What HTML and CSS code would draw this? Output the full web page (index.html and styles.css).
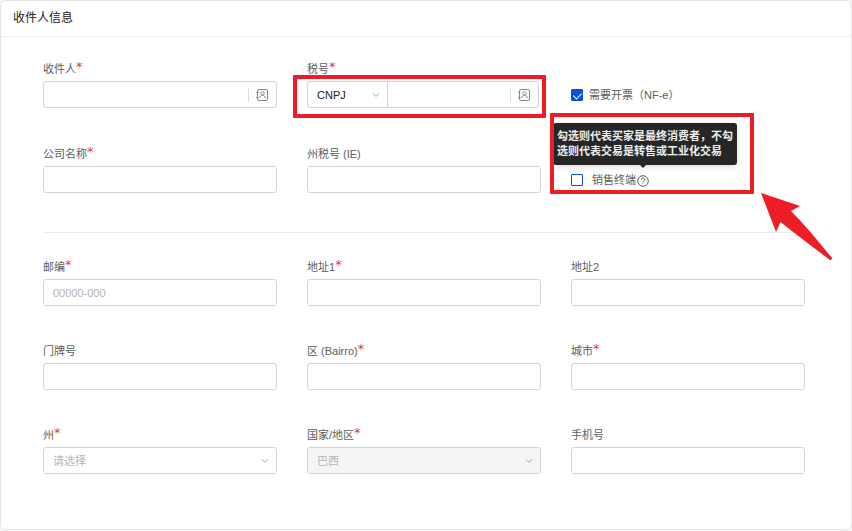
FILE: index.html
```html
<!DOCTYPE html>
<html lang="zh-CN">
<head>
<meta charset="utf-8">
<meta name="viewport" content="width=device-width, initial-scale=1">
<title>收件人信息</title>
<link rel="stylesheet" href="styles.css">
</head>
<body>
<svg class="sprite" aria-hidden="true">
  <symbol id="contact" viewBox="0 0 12 12">
    <rect x="1.5" y="0.5" width="10" height="11" rx="1.5"/>
    <circle cx="6.5" cy="4.4" r="1.7"/>
    <path d="M3.6 9.2C4 7.2 5 6.2 6.5 6.2S9 7.2 9.4 9.2M0.2 3.5H2.4M0.2 8.5H2.4"/>
  </symbol>
  <symbol id="chevron" viewBox="0 0 8 8">
    <path d="M0.8 2.4L4 5.4L7.2 2.4"/>
  </symbol>
</svg>
<main class="card">
  <header class="card-header"><h1>收件人信息</h1></header>
  <form class="card-body">
    <section class="grid grid-company">
      <div class="field">
        <label for="recipient">收件人<span class="required">*</span></label>
        <div class="control">
          <input id="recipient" type="text">
          <button type="button" class="picker" aria-label="选择收件人"><svg><use href="#contact"/></svg></button>
        </div>
      </div>
      <div class="field">
        <label for="tax">税号<span class="required">*</span></label>
        <div class="control control-tax">
          <div class="tax-type">
            <select aria-label="税号类型"><option>CNPJ</option></select>
            <svg class="chevron"><use href="#chevron"/></svg>
          </div>
          <input id="tax" type="text">
          <button type="button" class="picker" aria-label="选择税号"><svg><use href="#contact"/></svg></button>
          <span class="highlight highlight-tax"></span>
        </div>
      </div>
      <div class="field field-check">
        <input id="invoice" type="checkbox" checked>
        <label for="invoice">需要开票（NF-e）</label>
      </div>
      <div class="field">
        <label for="company">公司名称<span class="required">*</span></label>
        <input class="control" id="company" type="text">
      </div>
      <div class="field">
        <label for="ie">州税号 (IE)</label>
        <input class="control" id="ie" type="text">
      </div>
      <div class="field field-check field-terminal">
        <input id="terminal" type="checkbox">
        <label for="terminal">销售终端</label>
        <button type="button" class="help" aria-label="说明" aria-describedby="tip">
          <svg viewBox="0 0 12 12"><circle cx="6" cy="6" r="5.3"/><path d="M4.3 4.8C4.3 3.6 5 3 6 3S7.7 3.7 7.7 4.6C7.7 5.8 6 5.9 6 7.3M6 8.3V9.2"/></svg>
        </button>
        <div class="tooltip" id="tip" role="tooltip">勾选则代表买家是最终消费者，不勾选则代表交易是转售或工业化交易</div>
        <span class="highlight highlight-terminal"></span>
        <svg class="arrow" viewBox="0 0 72 68" aria-hidden="true"><path d="M0 0L39 13L30 18C43 31 58 49 71 65Q71.500 67 69 67C53 55 36 42 19.500 29L15 39Z"/></svg>
      </div>
    </section>
    <section class="grid grid-address">
      <div class="field">
        <label for="zip">邮编<span class="required">*</span></label>
        <input class="control" id="zip" type="text" placeholder="00000-000">
      </div>
      <div class="field">
        <label for="address1">地址1<span class="required">*</span></label>
        <input class="control" id="address1" type="text">
      </div>
      <div class="field">
        <label for="address2">地址2</label>
        <input class="control" id="address2" type="text">
      </div>
      <div class="field">
        <label for="number">门牌号</label>
        <input class="control" id="number" type="text">
      </div>
      <div class="field">
        <label for="district">区 (Bairro)<span class="required">*</span></label>
        <input class="control" id="district" type="text">
      </div>
      <div class="field">
        <label for="city">城市<span class="required">*</span></label>
        <input class="control" id="city" type="text">
      </div>
      <div class="field">
        <label for="state">州<span class="required">*</span></label>
        <div class="control">
          <select id="state" class="muted"><option>请选择</option></select>
          <svg class="chevron"><use href="#chevron"/></svg>
        </div>
      </div>
      <div class="field">
        <label for="country">国家/地区<span class="required">*</span></label>
        <div class="control disabled">
          <select id="country" class="muted" disabled><option>巴西</option></select>
          <svg class="chevron"><use href="#chevron"/></svg>
        </div>
      </div>
      <div class="field">
        <label for="phone">手机号</label>
        <input class="control" id="phone" type="text">
      </div>
    </section>
  </form>
</main>
</body>
</html>
```
FILE: styles.css
```css
* { box-sizing: border-box; }

body {
  margin: 0;
  background: #f5f5f6;
  color: #5c5c5c;
  font: 11px/16px "Liberation Sans", "Noto Sans CJK SC", sans-serif;
}

.sprite { position: absolute; width: 0; height: 0; }

svg {
  fill: none;
  stroke: currentColor;
}

.card {
  background: #fff;
  border: 1px solid #e4e4e6;
  border-radius: 6px;
}

.card-header {
  padding: 8px 12px;
  border-bottom: 1px solid #eee;
}

.card-header h1 {
  margin: 0;
  color: #222;
  font-size: 12px;
  font-weight: 400;
  line-height: 19px;
}

.card-body { padding: 24px 46px 55px 42px; }

.grid {
  display: grid;
  grid-template-columns: repeat(3, minmax(0, 1fr));
  gap: 37px 30px;
}

.grid-company {
  row-gap: 38px;
  padding-bottom: 39px;
  border-bottom: 1px solid #ebebeb;
}

.grid-address { padding-top: 26px; }

.field {
  display: flex;
  flex-direction: column;
  gap: 4px;
}

.field label {
  display: flex;
  height: 16px;
  white-space: nowrap;
}

.required {
  color: #ee3344;
  font: 13px/12px "DejaVu Sans", sans-serif;
}

input, select, button {
  font: inherit;
  color: inherit;
}

.control {
  position: relative;
  display: flex;
  align-items: center;
  width: 100%;
  height: 27px;
  background: #fff;
  border: 1px solid #d3d3d3;
  border-radius: 3px;
}

.control-tax { width: calc(100% - 2px); }

input.control { padding: 0 9px; }

.control input, .control select {
  flex: 1;
  min-width: 0;
  height: 100%;
  padding: 0 9px;
  border: 0;
  background: transparent;
  appearance: none;
}

input::placeholder { color: #b4b4b4; }

.control .muted {
  color: #b4b4b4;
  opacity: 1;
}

.control.disabled { background: #f4f4f4; }

.chevron {
  position: absolute;
  right: 7px;
  width: 8px;
  height: 8px;
  color: #aaa;
  pointer-events: none;
}

.picker {
  display: flex;
  align-items: center;
  justify-content: center;
  width: 28px;
  height: 14px;
  padding: 0 2px 0 0;
  border: 0;
  border-left: 1px solid #ddd;
  background: none;
  color: #888;
}

.picker svg { width: 12px; height: 12px; }

.tax-type {
  position: relative;
  display: flex;
  align-items: center;
  flex: 0 0 80px;
  height: 100%;
  border-right: 1px solid #d3d3d3;
  color: #222;
}

.field-check {
  position: relative;
  flex-direction: row;
  align-items: center;
  align-self: end;
  gap: 6px;
  height: 27px;
}

.field-check input {
  position: relative;
  width: 12px;
  height: 12px;
  margin: 0;
  border: 1px solid #0b4fe0;
  border-radius: 1px;
  background: #fff;
  appearance: none;
}

.field-check input:checked { background: #0b4fe0; }

.field-check input:checked::after {
  content: "";
  position: absolute;
  left: 3px;
  top: 1px;
  width: 4px;
  height: 7px;
  border: solid #fff;
  border-width: 0 1px 1px 0;
  transform: rotate(45deg);
}

.field-terminal input { margin-right: 3px; }

.help {
  display: flex;
  margin-left: -5px;
  padding: 2px 0 0;
  border: 0;
  background: none;
}

.help svg { width: 12px; height: 12px; }

.tooltip {
  position: absolute;
  left: -18px;
  bottom: 28px;
  width: 184px;
  padding: 6px 4px;
  border-radius: 3px;
  background: #262626;
  box-shadow: 0 2px 6px rgb(0 0 0 / 15%);
  color: #eee;
  font-weight: 700;
  line-height: 15px;
}

.tooltip::after {
  content: "";
  position: absolute;
  left: 87px;
  top: 100%;
  border: 3px solid transparent;
  border-top-color: #262626;
}

.highlight {
  position: absolute;
  border: 4px solid #ee1c25;
  border-radius: 1px;
  pointer-events: none;
}

.highlight-tax { inset: -7px -8px -11px -15px; }

.highlight-terminal {
  left: -21px;
  top: -53px;
  width: 204px;
  height: 81px;
}

.arrow {
  position: absolute;
  left: 190px;
  top: 27px;
  width: 72px;
  height: 68px;
  fill: #ee1c25;
  stroke: none;
  pointer-events: none;
}
```
